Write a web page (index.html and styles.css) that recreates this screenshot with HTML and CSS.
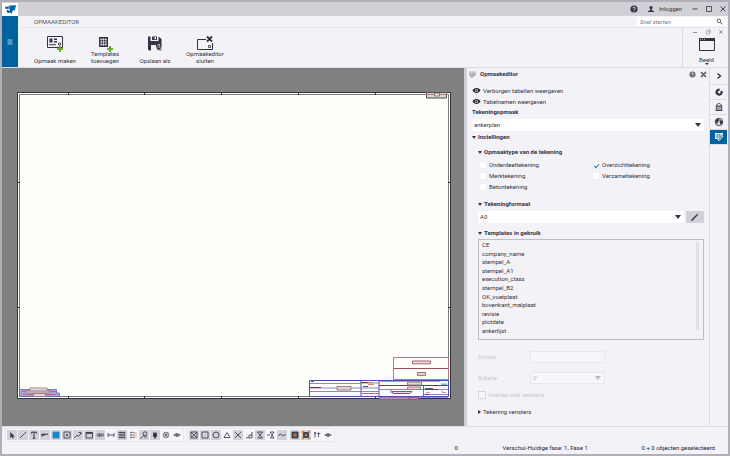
FILE: index.html
```html
<!DOCTYPE html>
<html lang="nl">
<head>
<meta charset="utf-8">
<title>Opmaakeditor</title>
<link rel="stylesheet" href="styles.css">
</head>
<body>
<header class="titlebar">
  <svg class="logo" viewBox="0 0 16 13"><path fill="#0063a0" d="M2.800 4l4-.8v2.600l-3 .3zM7.300 2.500l6.700-.3-1.200 5.300-1.800-.2-1.500 3.500-2.500-1.800 1-2.200-.7-.3zM4.300 7.300l2-.3 1.700 2.500-2.300.8z"/></svg>
  <span class="grow"></span>
  <button class="plain" aria-label="Help"><svg width="8" height="8" viewBox="0 0 8 8"><circle cx="4" cy="4" r="3.600" fill="#343343"/><path d="M2.900 3.200c0-1.500 2.300-1.400 2.300 0 0 .8-1.100.8-1.100 1.600M4.100 5.500v.8" stroke="#fff" stroke-width=".8" fill="none"/></svg></button>
  <button class="plain login"><svg width="8" height="8" viewBox="0 0 8 8"><circle cx="4" cy="2.600" r="1.600" fill="#343343"/><path d="M3.200 4h1.600v1.200L7 6v1H1V6l2.200-.8z" fill="#343343"/></svg>Inloggen</button>
  <button class="plain" aria-label="Minimaliseren"><svg width="8" height="8" viewBox="0 0 8 8"><path d="M1.500 4h5" stroke="#343343" stroke-width=".9"/></svg></button>
  <button class="plain" aria-label="Maximaliseren"><svg width="8" height="8" viewBox="0 0 8 8"><path d="M1.500 1.500h5v5h-5z" fill="none" stroke="#343343" stroke-width=".8"/></svg></button>
  <button class="plain" aria-label="Sluiten"><svg width="8" height="8" viewBox="0 0 8 8"><path d="M1.500 1.500l5 5m0-5l-5 5" stroke="#343343" stroke-width=".9"/></svg></button>
</header>

<div class="top">
  <button class="menu" aria-label="Menu"><svg width="6" height="6" viewBox="0 0 6 6"><path d="M.5 1h5M.5 3h5M.5 5h5" stroke="#b9d5e8" stroke-width=".9"/></svg></button>
  <div class="top-main">
    <div class="tabrow">
      <span class="tab">OPMAAKEDITOR</span>
      <label class="search"><input type="text" placeholder="Snel starten" aria-label="Snel starten"><svg width="7" height="7" viewBox="0 0 7 7"><circle cx="3" cy="2.800" r="1.800" fill="none" stroke="#444352" stroke-width=".8"/><path d="M4.300 4.200L6.300 6.300" stroke="#444352"/></svg></label>
    </div>
    <div class="ribbon">
      <nav class="actions">
        <button class="action"><svg width="18" height="17" viewBox="0 0 18 17"><path d="M1.500 1.500h15v11h-15z" fill="none" stroke="#343343"/><path d="M3.500 3.500h3v4h-3zM8 3.500h3v1.600H8zM8 6h3v1.500H8zM3 9.300h7v1H3z" fill="#343343"/><path d="M12.500 8h2v2h-2z" fill="none" stroke="#343343" stroke-width=".8"/><path d="M14 11v6M11 14h6" stroke="#6cac35" stroke-width="2"/></svg><span>Opmaak maken</span></button>
        <button class="action two"><svg width="18" height="17" viewBox="0 0 18 17"><path d="M3 2h9v10H3z" fill="#343343"/><path d="M4 4.500h7M4 7h7M4 9.500h7M5.200 3v8M7.500 3v8M9.800 3v8" stroke="#f3f2f7" stroke-width=".6"/><path d="M14 11v6M11 14h6" stroke="#6cac35" stroke-width="2"/></svg><span>Templates<br>toevoegen</span></button>
        <button class="action"><svg width="18" height="17" viewBox="0 0 18 17"><path d="M2 1.500h2.500V6h8V1.500L15.500 4v11.500H12l-2-2V10H5v5.500H3.200L2 14.300z" fill="#343343"/><path d="M6 1.500h5V5H6z" fill="#343343"/><path d="M8.500 2h1.500v2.300H8.500zM5 10h5v2H5z" fill="#f3f2f7"/><path d="M12.800 9v6M10.300 12.500l2.500 2.500 2.500-2.500" stroke="#f3f2f7" stroke-width="2.200" fill="none"/><path d="M12.800 9.500v5M10.800 12.500l2 2.200 2-2.200" stroke="#343343" stroke-width="1.200" fill="none"/></svg><span>Opslaan als</span></button>
        <button class="action two"><svg width="18" height="17" viewBox="0 0 18 17"><path d="M10 4.500H1.500v10h15V8" fill="none" stroke="#343343"/><path d="M11 1.500l5 5m0-5l-5 5" stroke="#343343" stroke-width="1.800"/><path d="M12.500 10.500h2v2h-2z" fill="none" stroke="#343343" stroke-width=".8"/></svg><span>Opmaakeditor<br>sluiten</span></button>
      </nav>
      <div class="view">
        <div class="mdi">
          <button class="plain" aria-label="Venster minimaliseren"><svg width="6" height="6" viewBox="0 0 6 6"><path d="M1 3.500h4" stroke="#77767f" stroke-width=".8"/></svg></button>
          <button class="plain" aria-label="Venster herstellen"><svg width="6" height="6" viewBox="0 0 6 6"><path d="M1.300 2h3v3h-3zM2.300 1h3v3" fill="none" stroke="#8d8c95" stroke-width=".6"/></svg></button>
          <button class="plain" aria-label="Venster sluiten"><svg width="6" height="6" viewBox="0 0 6 6"><path d="M1.300 1.300l3.400 3.400m0-3.400L1.300 4.700" stroke="#77767f" stroke-width=".8"/></svg></button>
        </div>
        <button class="action beeld"><svg width="18" height="15" viewBox="0 0 18 15"><path d="M1.500 1.500h15v12h-15z" fill="#f3f2f7" stroke="#343343"/><path d="M1 1h16v3H1z" fill="#343343"/><path d="M2 2.300h1m1 0h1m1 0h1" stroke="#fff" stroke-width=".7"/></svg><span>Beeld</span><i class="tri"></i></button>
      </div>
    </div>
  </div>
</div>

<main class="work">
  <section class="canvas" aria-label="Tekening">
    <svg viewBox="2 68 462 358" preserveAspectRatio="none">
      <path d="M17.500 92.500h433v306h-433z" fill="#fff" stroke="#33333a"/>
      <path d="M19.500 94.500h429v302h-429z" fill="#fefefb" stroke="#55555a" stroke-width=".8"/>
      <path d="M68.500 92v3m76-3v3m77-3v3m77-3v3m77-3v3M68.500 396v3m76-3v3m77-3v3m77-3v3m77-3v3M17 182.500h3m-3 125h3M448 182.500h3m-3 125h3" stroke="#333"/>
      <path d="M426 92h21v6.500h-21z" fill="#d8d5d5"/>
      <path d="M426.500 98v-5.500h20V98z" fill="none" stroke="#555"/>
      <path d="M426 94.500h22" stroke="#c37a7f"/><path d="M434.500 93h5v3h-5z" fill="#ddd" stroke="#8a4a50" stroke-width=".7"/>
      <g fill="none" stroke="#b07c7f">
        <path d="M393.500 357.500h55v22h-55z"/><path d="M393.500 368.500h55" stroke="#96555b"/>
        <path d="M412.500 361h18v2.800h-18zM417.500 372.500h8v2.800h-8z" fill="#e5dfdf" stroke="#a3666b"/>
      </g>
      <g fill="none" stroke="#6a6cb8" stroke-width=".8">
        <path d="M309.500 380.500h139v16h-139zM361 380v16M379 380v16" stroke="#4e50a8" stroke-width="1"/>
        <path d="M310 383.500h51M310 388h69M310 391.500h51M361 383h18M361 391.500h18M379 389.500h69M424 394.500h24"/>
        <path d="M423.500 386v11" stroke="#4446a0"/>
        <path d="M311 381.500h3m47 1h6m-4 4h5m57 2h8m-8 6h4" stroke="#252678"/>
      </g>
      <path d="M310 387.500h11m43-5h4m11 3h69M425 389.500h13" stroke="#982b45"/>
      <path d="M368 382.500h5m-5 2h6m6-3h60M426 392.500h4m12-2v2h4" stroke="#e8676d" stroke-width=".8" fill="none"/>
      <path d="M337 386.500h14v3.500h-14zM407.500 382h14v3h-14zM407.500 387h13v2.500h-13z" fill="#ddd7db" stroke="#a47b86"/>
      <path d="M392 391.500h20l-2 2h-17z" fill="#e4dfdf" stroke="#805a65"/><path d="M391 390v3" stroke="#327e99"/>
      <path d="M361 393.500h18" stroke="#aa7379"/>
      <path d="M379 397.500h40v1.500h-40zM409 397h10v2.500h-10z" fill="#cdbabf" stroke="#8c4c59" stroke-width=".7"/>
      <path d="M420 398h28" stroke="#292978"/>
      <path d="M442 383.500v2.500m2-2.500v2.500m2-2.500v2.500" stroke="#4446a0"/>
      <path d="M19.500 389.500h37v3.500h3v3.500h-40z" fill="#a5a5dc" stroke="#5c5db0" stroke-width=".7"/>
      <path d="M22 391.500h34M23 394.500h33" stroke="#dd6271"/>
      <path d="M30 388h17v2h3v3H26v-3h4zM33.500 393.500h12v3h-12z" fill="#e2d9da" stroke="#a06c71" stroke-width=".8"/>
      <path d="M27 391h23" stroke="#3f3d8e" stroke-width=".6"/>
    </svg>
  </section>

  <aside class="panel">
    <div class="panel-head">
      <svg width="7" height="7" viewBox="0 0 7 7"><path d="M.5.500h6v3l-3 .5v1h-3z" fill="#a5a5ae"/><path d="M1 2h5M2.500.500v4M4.500.500v3" stroke="#f3f2f7" stroke-width=".4"/><path d="M6.300 3L3 6.500l-1.300-1.300" fill="none" stroke="#666571" stroke-width=".9"/></svg>
      <h1>Opmaakeditor</h1><span class="grow"></span>
      <button class="plain" aria-label="Help"><svg width="7" height="7" viewBox="0 0 8 8"><circle cx="4" cy="4" r="3.500" fill="#686773"/><path d="M2.900 3.200c0-1.500 2.300-1.400 2.300 0 0 .8-1.100.8-1.100 1.600M4.100 5.500v.8" stroke="#fff" stroke-width=".8" fill="none"/></svg></button>
      <button class="plain" aria-label="Sluiten"><svg width="7" height="7" viewBox="0 0 7 7"><path d="M1 1l5 5m0-5L1 6" stroke="#5b5a67" stroke-width="1.600"/></svg></button>
    </div>
    <button class="eye"><svg width="9" height="7" viewBox="0 0 9 7"><path d="M.5 3.500C2.500.3 6.500.3 8.500 3.500 6.500 6.700 2.500 6.700.5 3.500z" fill="#252430"/><circle cx="4.500" cy="3.500" r="1.600" fill="#f3f2f7"/><circle cx="4.500" cy="3.500" r="1" fill="#252430"/></svg>Verborgen tabellen weergeven</button>
    <button class="eye"><svg width="9" height="7" viewBox="0 0 9 7"><path d="M.5 3.500C2.500.3 6.500.3 8.500 3.500 6.500 6.700 2.500 6.700.5 3.500z" fill="#252430"/><circle cx="4.500" cy="3.500" r="1.600" fill="#f3f2f7"/><circle cx="4.500" cy="3.500" r="1" fill="#252430"/></svg>Tabelnamen weergeven</button>
    <label class="field-title" for="layout">Tekeningopmaak</label>
    <div class="select"><select id="layout"><option>ankerplan</option></select><i class="tri"></i></div>
    <h2 class="section"><i class="tri"></i>Instellingen</h2>
    <div class="settings">
      <h3 class="section"><i class="tri"></i>Opmaaktype van de tekening</h3>
      <div class="checks">
        <label><input type="checkbox">Onderdeeltekening</label>
        <label><input type="checkbox" checked>Overzichttekening</label>
        <label><input type="checkbox">Merktekening</label>
        <label><input type="checkbox">Verzameltekening</label>
        <label><input type="checkbox">Betontekening</label>
      </div>
      <h3 class="section"><i class="tri"></i>Tekeningformaat</h3>
      <div class="format">
        <div class="select"><select aria-label="Tekeningformaat"><option>A0</option></select><i class="tri"></i></div>
        <button class="edit" aria-label="Bewerken"><svg width="10" height="10" viewBox="0 0 10 10"><path d="M2.500 7.500L7.500 2.500" stroke="#343343" stroke-width="1.500"/><path d="M1.500 8.500l.4-1.600 1.200 1.200zM7.800 1.500l.8.800" fill="#343343" stroke="#343343" stroke-width=".5"/></svg></button>
      </div>
      <h3 class="section"><i class="tri"></i>Templates in gebruik</h3>
      <div class="listbox">
        <ul>
          <li>CE</li><li>company_name</li><li>stempel_A</li><li>stempel_A1</li><li>execution_class</li><li>stempel_B2</li><li>OK_voetplaat</li><li>bovenkant_malplaat</li><li>revisie</li><li>plotdate</li><li>ankerlijst</li>
        </ul>
        <span class="thumb"></span>
      </div>
      <div class="disabled">
        <label for="scale">Schaal</label><input id="scale" type="text" disabled>
        <label for="rot">Rotatie</label><div class="select"><select id="rot" disabled><option>0°</option></select><i class="tri"></i></div>
      </div>
      <label class="overlap"><input type="checkbox" disabled>Overlap met vensters</label>
      <h3 class="closed"><i class="tri right"></i>Tekening vensters</h3>
    </div>
  </aside>

  <nav class="rail">
    <button aria-label="Inklappen"><svg width="10" height="10" viewBox="0 0 10 10"><path d="M3.500 2.500L6.500 5l-3 2.500" fill="none" stroke="#343343" stroke-width="1.400"/></svg></button>
    <button aria-label="Eigenschappen"><svg width="10" height="10" viewBox="0 0 10 10"><path d="M5.500 1.500l.3 2.200C3.500 3.600 3.300 6 5 6.400c1 .2 1.600-.3 1.700-1L5.500 5.200 7.800 3.600 9.300 6H8.500C8 8.500 5.500 9.300 3.500 8.300 1 7 .9 4 2.700 2.500 3.500 1.800 4.500 1.500 5.500 1.500z" fill="#343343"/></svg></button>
    <button aria-label="Catalogus"><svg width="10" height="10" viewBox="0 0 10 10"><path d="M1.500 8.500h7M2.300 8V4C2.500 2.500 4 1.500 5 1.500S7.500 2.500 7.700 4v4M2.300 4h5.400M4 4v4M6 4v4" fill="none" stroke="#343343" stroke-width=".9"/></svg></button>
    <button aria-label="Online"><svg width="10" height="10" viewBox="0 0 10 10"><circle cx="5" cy="5" r="3.800" fill="#ddd" stroke="#343343" stroke-width=".8"/><path d="M2 2.500l3-1 .5 2-2 1.500v2.500l-2-2.500zM6.500 3l2 1v2.500l-2 1-1-2.500z" fill="#343343"/></svg></button>
    <button class="active" aria-label="Opmaakeditor"><svg width="10" height="10" viewBox="0 0 10 10"><path d="M1 1h8v3.500L5.500 7H1z" fill="#fff"/><path d="M1.500 3h7M1.500 5h6M3.300 1.500v5M5.700 1.500v4" stroke="#0063a0" stroke-width=".6"/><path d="M9 4L5 8.700 3.300 7.200" stroke="#0063a0" stroke-width="2" fill="none"/><path d="M9 4L5 8.700 3.300 7.200" stroke="#fff" fill="none"/></svg></button>
  </nav>
</main>

<footer>
  <div class="tools">
    <div class="group">
      <button class="on" aria-label="Selecteren"><svg viewBox="0 0 10 10"><path d="M3.500 2.500v5l1.300-1 .8 1.700.8-.4-.8-1.600h1.600z" fill="#343343" stroke-width=".5"/></svg></button>
      <button class="on" aria-label="Lijn"><svg viewBox="0 0 10 10"><path d="M2 8l6-6"/></svg></button>
      <button class="on" aria-label="Tekst"><svg viewBox="0 0 10 10"><path d="M2.500 3.500v-1.300h5v1.300M5 2.200v6M3.800 8.300h2.400" stroke-width="1"/></svg></button>
      <button class="on" aria-label="Maat"><svg viewBox="0 0 10 10"><path d="M2 6.500V4.300h6M2 5h3" stroke-width="1.100"/></svg></button>
      <button class="on" aria-label="Vlak"><svg viewBox="0 0 10 10"><path d="M2 2h6v6H2z" fill="#1b87cb" stroke="#1b87cb"/></svg></button>
      <button class="on" aria-label="Onderdeel"><svg viewBox="0 0 10 10"><path d="M2 2h6v6H2z"/><path d="M4.500 4.500h1v1h-1z" fill="#343343"/></svg></button>
      <button class="on" aria-label="Las"><svg viewBox="0 0 10 10"><path d="M1.500 8l2.500-3 1.500 1.500L8 3M5.500 2.500H8v2"/></svg></button>
      <button class="on" aria-label="Aanzicht"><svg viewBox="0 0 10 10"><path d="M2 2.500h6.500v5.500H2z"/><path d="M2 3h6.500" stroke-width="1.500"/></svg></button>
      <button class="on" aria-label="Bouten"><svg viewBox="0 0 10 10"><path d="M1.500 5h7M3 3v4M4.500 3v4M6 3v4M8 3v4" stroke-width=".6"/></svg></button>
      <button aria-label="Bout"><svg viewBox="0 0 10 10"><path d="M2 5h6M2 3v4M8 3v4"/></svg></button>
      <button class="on" aria-label="Stramien"><svg viewBox="0 0 10 10"><path d="M1.500 2.500h7M1.500 5h7M1.500 7.500h7M3 1.500v7M5 1.500v7M7.200 1.500v7" stroke-width=".7"/></svg></button>
      <button aria-label="Stramienlijn"><svg viewBox="0 0 10 10"><path d="M2 2.500h5M2 5h5M2 7.500h5M3 1.500v7" opacity=".6"/><path d="M5.500 1.500v7M8 2v6" stroke="#ef9147" stroke-width=".7"/></svg></button>
      <button class="on" aria-label="Symbool"><svg viewBox="0 0 10 10"><path d="M1.500 8.500l4-3.500"/><circle cx="6" cy="3.800" r="2"/><path d="M5 7h3"/></svg></button>
      <button class="on" aria-label="Plug-in"><svg viewBox="0 0 10 10"><path d="M3.500 3.500h3v3L5.500 7.500h-1l-1-1zM4 2v1.500M6 2v1.500M5 7.500V9" fill="#343343"/></svg></button>
      <button aria-label="Detail"><svg viewBox="0 0 10 10"><circle cx="5" cy="5" r="2.800" stroke-width=".6"/><circle cx="5" cy="5" r="1.200" stroke-width=".6"/><path d="M2.800 2.800l4.400 4.400m0-4.400L2.800 7.200" stroke-width=".4"/></svg></button>
      <button aria-label="Weergave"><svg viewBox="0 0 10 10"><path d="M1.800 5Q5 2 8.200 5 5 8 1.800 5z"/><circle cx="5" cy="5" r=".7"/></svg></button>
    </div>
    <div class="group">
      <button class="on" aria-label="Snap punt"><svg viewBox="0 0 10 10"><path d="M2 2h6v6H2zM2 2l6 6m0-6L2 8"/></svg></button>
      <button class="on" aria-label="Snap eindpunt"><svg viewBox="0 0 10 10"><path d="M2 2h6v6H2z"/></svg></button>
      <button class="on" aria-label="Snap middelpunt"><svg viewBox="0 0 10 10"><circle cx="5" cy="5" r="3"/></svg></button>
      <button aria-label="Snap midden"><svg viewBox="0 0 10 10"><path d="M5 2.500L8 7.500H2z"/></svg></button>
      <button class="on" aria-label="Snap snijpunt"><svg viewBox="0 0 10 10"><path d="M2 2l6 6m0-6L2 8"/></svg></button>
      <button aria-label="Snap loodrecht"><svg viewBox="0 0 10 10"><path d="M2 7.800h6V2M5 7.500V5h3"/></svg></button>
      <button class="on" aria-label="Snap dichtstbij"><svg viewBox="0 0 10 10"><path d="M2.500 2h5L3 8h4.500L2.500 2"/></svg></button>
      <button aria-label="Snap verlengde"><svg viewBox="0 0 10 10"><path d="M4 2h4L4.500 8H8L4 2M1 5h3"/></svg></button>
      <button class="on" aria-label="Snap vrij"><svg viewBox="0 0 10 10"><path d="M1.500 6Q3 2.500 5 5t3.500-1"/></svg></button>
      <button class="on split" aria-label="Referentie"><svg viewBox="0 0 10 10"><path d="M2 2h6v6H2z" fill="#4b4a59"/><path d="M4 4h2v2H4z" stroke="#e88638"/></svg></button>
      <button class="on" aria-label="Geometrie"><svg viewBox="0 0 10 10"><path d="M2.500 2.500h5v5h-5z" fill="#4b4a59"/><path d="M1.500 3V1.500H3M7 1.500h1.500V3M1.500 7v1.500H3M7 8.500h1.500V7M4 5h2" stroke="#e88638" stroke-width="1.300"/></svg></button>
      <button aria-label="Sorteren"><svg viewBox="0 0 10 10"><path d="M3 2v5.500M2 3h2.500M6.500 2.500V7M5.300 3.500h3"/></svg></button>
      <button aria-label="Tonen"><svg viewBox="0 0 10 10"><path d="M1.800 5Q5 2 8.200 5 5 8 1.800 5z"/><circle cx="5" cy="5" r=".7"/></svg></button>
    </div>
  </div>
  <div class="status"><span class="zero">0</span><span class="move">Verschui-</span><span class="phase">Huidige fase: 1, Fase 1</span><span class="selected">0 + 0 objecten geselecteerd</span></div>
</footer>
</body>
</html>
```
FILE: styles.css
```css
* { box-sizing: border-box; }
body {
  margin: 0;
  height: 100vh;
  display: flex;
  flex-direction: column;
  border: 2px solid #b1b0b8;
  background: #f3f2f7;
  color: #343343;
  font: 6px/8px Roboto, "Open Sans", sans-serif;
}
button, input, select { font: inherit; color: inherit; margin: 0; padding: 0; border: 0; background: none; border-radius: 0; }
svg { display: block; flex: none; }
h1, h2, h3, ul { margin: 0; padding: 0; font-size: inherit; list-style: none; }
.grow { flex: 1; }
.plain { display: flex; align-items: center; }
.tri { border: 2px solid transparent; border-top: 3px solid #343343; border-bottom: 0; flex: none; }
.tri.right { border: 2px solid transparent; border-left: 3px solid #343343; border-right: 0; }

.titlebar { display: flex; align-items: center; height: 14px; gap: 6px; padding-right: 1px; background: #d0d1d6; }
.logo { width: 16px; height: 13px; background: #fff; }
.login { gap: 4px; margin: 0 3px; }

.top { display: flex; height: 52px; border-bottom: 1px solid #dddce3; }
.menu { width: 16px; background: #0063a0; display: grid; place-items: center; }
.top-main { flex: 1; display: flex; flex-direction: column; }
.tabrow { display: flex; justify-content: space-between; align-items: center; height: 11px; padding: 0 1px 0 16px; }
.tab { color: #565562; }
.search { display: flex; align-items: center; width: 90px; height: 9px; padding: 0 4px 0 3px; background: #fff; }
.search input { flex: 1; min-width: 0; height: 9px; font-style: italic; outline: 0; }
.search input::placeholder { color: #777683; }
.ribbon { flex: 1; display: flex; justify-content: space-between; border-top: 1px solid #e7e6ed; }
.actions { display: flex; padding: 7px 0 0 12px; }
.action { display: flex; flex-direction: column; align-items: center; line-height: 7px; }
.actions .action { width: 50px; gap: 5px; }
.actions .two { gap: 0; }
.actions .two svg { margin-bottom: -2px; }
.view { width: 46px; border-left: 1px solid #dddce3; }
.mdi { display: flex; justify-content: flex-end; gap: 7px; padding: 1px 4px 0 0; }
.beeld { margin: 2px auto 0; padding-left: 2px; }
.beeld span { margin-top: 4px; }
.beeld .tri { border-width: 2px 2px 0; }

.work { flex: 1; min-height: 0; display: flex; }
.canvas { flex: 1; min-width: 0; background: #808080; }
.canvas svg { width: 100%; height: 100%; }
.panel { width: 245px; border-left: 3px solid #d0cfd8; padding: 2px 5px 0; }
.panel-head { display: flex; align-items: center; height: 8px; margin: 0 -3px 8px; gap: 4px; }
.eye { display: flex; align-items: center; gap: 2px; height: 9px; margin-bottom: 2px; }
.field-title { display: block; font-weight: 700; margin-top: 2px; }
.select { position: relative; display: flex; background: #fff; height: 12px; margin-top: 3px; }
.select select { flex: 1; appearance: none; padding: 0 2px; outline: 0; }
.select .tri { position: absolute; right: 3px; top: 4px; border-width: 4px 3px 0; }
.section { display: flex; align-items: center; gap: 2px; height: 8px; font-weight: 700; }
h2.section { margin-top: 2px; }
.settings { padding-left: 6px; }
h3.section { margin-top: 7px; }
.checks { display: grid; grid-template-columns: 1fr 1fr; row-gap: 3px; margin-top: 5px; }
.checks + .section { margin-top: 9px; }
.checks label, .overlap { display: flex; align-items: center; gap: 2px; height: 8px; }
input[type="checkbox"] { appearance: none; width: 8px; height: 8px; background: #fff; margin-left: 1px; display: flex; justify-content: center; border: 1px solid #efeef4; }
input[type="checkbox"]:checked::after { content: ""; width: 4px; height: 2px; margin-top: 2px; border: solid #1774b5; border-width: 0 0 1px 1px; transform: rotate(-45deg); }
.format { display: flex; gap: 2px; margin-top: 3px; height: 12px; }
.format .select { flex: 1; margin: 0; }
.format + .section { margin-top: 6px; }
.edit { width: 18px; background: #d0d1d8; display: grid; place-items: center; }
.listbox { display: flex; justify-content: space-between; height: 101px; margin-top: 2px; border: 1px solid #bfbec8; padding: 1px 4px 4px 3px; }
.listbox ul { display: flex; flex-direction: column; justify-content: space-between; }
.thumb { width: 3px; height: 88px; margin-top: 1px; background: #e2e1e8; }
.disabled { display: grid; grid-template-columns: 52px 75px; row-gap: 9px; align-items: center; margin-top: 11px; color: #c8c7cf; }
.disabled input, .disabled .select { height: 12px; margin: 0; background: #f7f6fa; border: 1px solid #e9e8ee; }
.disabled select { color: #c8c7cf; opacity: 1; }
.disabled .tri { border-top-color: #bdbcc5; top: 3px; }
.overlap { margin-top: 7px; color: #c8c7cf; }
.overlap input[type="checkbox"] { margin-left: 0; border-color: #d8d7de; background: #f7f6fa; }
.closed { display: flex; align-items: center; gap: 2px; margin-top: 9px; font-weight: 400; }
.rail { width: 19px; border-left: 1px solid #dddce3; padding-right: 1px; display: flex; flex-direction: column; }
.rail button { height: 15px; display: grid; place-items: center; border-bottom: 1px solid #dddce3; }
.rail button:first-child { height: 17px; }
.rail .active { background: #0063a0; }

footer { height: 28px; border-top: 1px solid #dddce3; }
.tools { display: flex; gap: 3px; padding: 1px 3px 0; }
.group { display: flex; gap: 1px; padding: 1px; border: 1px solid #e9e8ee; background: #f6f5fa; }
.group button { width: 10px; height: 10px; }
.group .on { background: #d2d1da; }
.group .split { margin-left: 2px; }
.group svg { width: 10px; height: 10px; fill: none; stroke: #343343; stroke-width: .8; }
.status { display: flex; align-items: center; height: 12px; padding-right: 13px; color: #252430; }
.zero { margin-left: auto; width: 48px; }
.move { width: 25px; white-space: nowrap; }
.phase { width: 114px; }
```
